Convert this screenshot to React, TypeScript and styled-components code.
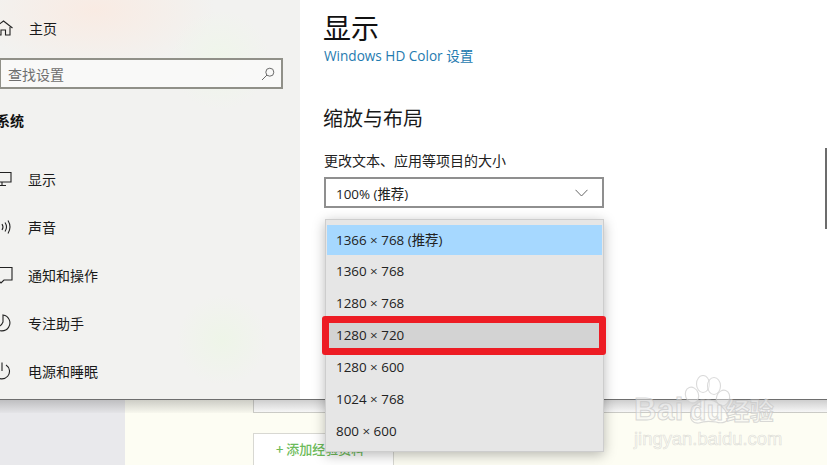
import React from "react";
import styled, { createGlobalStyle } from "styled-components";

const Global = createGlobalStyle`
  html, body { margin: 0; padding: 0; width: 827px; height: 465px; overflow: hidden; background: #fdfdf3; }
  * { box-sizing: border-box; }
`;
const FONT = `"Noto Sans CJK SC", "Noto Sans", sans-serif`;
const NUM = `"Open Sans", "Noto Sans CJK SC", sans-serif`;

const Page = styled.div`
  position: relative; width: 827px; height: 465px; overflow: hidden;
  display: flex; flex-direction: column; font-family: ${FONT}; color: #1a1a1a;
`;
const Win = styled.div`
  height: 400px; flex: none; display: flex; background: #fff;
  border-bottom: 1px solid #6e6e6e; position: relative; z-index: 2;
`;
const Sidebar = styled.nav`
  width: 300px; flex: none; overflow: hidden; padding-top: 18px;
  background:
    radial-gradient(circle 45px at 222px 340px, #eef5e8 0%, rgba(238,245,232,0) 100%),
    radial-gradient(circle 50px at 220px 60px, #eff6ea 0%, rgba(239,246,234,0) 100%),
    radial-gradient(ellipse 120px 60px at 95px 10px, #f9ebe3 0%, rgba(249,235,227,0) 100%),
    #f2f2f0;
`;
const NavRow = styled.div`
  height: 48px; display: flex; align-items: center; font-size: 14px; margin-left: -8px;
`;
const HomeRow = styled(NavRow)`
  height: 20px; margin-bottom: 20px; margin-left: -7px;
`;
const IconBox = styled.span`
  width: 36px; flex: none; display: flex; align-items: center; color: #222;
`;
const Search = styled.div`
  height: 31px; width: 284px; margin-left: -1px; border: 2px solid #909088;
  background: rgba(250,250,248,.9); display: flex; align-items: center;
  justify-content: space-between; padding: 0 6px 0 7px; font-size: 14px; color: #6e6e6e;
`;
const SectionTitle = styled.div`
  font-size: 14px; font-weight: 700; margin: 21px 0 25px -4px; line-height: 20px; color: #111;
`;
const Main = styled.main`
  flex: 1; padding: 10px 0 0 24px; position: relative;
`;
const Title = styled.h1`
  margin: 0 0 0 -1px; font-size: 28px; font-weight: 400; line-height: 34px; color: #111;
`;
const Link = styled.div`
  font-family: ${NUM}; font-size: 13.6px; color: #1f7bb0; line-height: 20px; margin-top: 2px;
`;
const Subtitle = styled.h2`
  margin: 37px 0 0 -1px; font-size: 20px; font-weight: 400; line-height: 30px; color: #1a1a1a;
`;
const FieldLabel = styled.div`
  font-size: 14px; line-height: 20px; margin-top: 17px; color: #222;
`;
const Combo = styled.div`
  width: 280px; height: 31px; margin-top: 7px; border: 2px solid #8f8f8f; background: #fff;
  display: flex; align-items: center; justify-content: space-between;
  padding: 0 14px 0 10px; font-family: ${NUM}; font-size: 13.4px; color: #222;
`;
const Scrollbar = styled.span`
  position: absolute; right: 0; top: 148px; width: 2px; height: 81px; background: #6c6c6c;
`;
const Below = styled.div`
  flex: 1; display: flex; background: #fdfdf3; position: relative;
`;
const Gutter = styled.div`
  width: 125px; flex: none; background: #e9e9ec;
`;
const Content = styled.div`
  flex: 1; padding-left: 128px; display: flex; flex-direction: column; align-items: flex-start;
`;
const CardEdge = styled.div`
  width: 100%; height: 13px; border-left: 1px solid #cfcfca; border-bottom: 1px solid #cfcfca; background: #fff;
`;
const AddButton = styled.div`
  width: 141px; height: 40px; margin-top: 20px; border: 1px solid #d8d8d2; background: #fff;
  padding: 5px 0 0 22px; font-size: 13px; line-height: 20px; font-weight: 500; color: #6dbb5a; white-space: nowrap;
`;
const Shade = styled.div`
  position: absolute; left: 0; right: 0; top: 400px; height: 13px; z-index: 3;
  background: linear-gradient(to bottom, rgba(80,80,80,.28), rgba(120,120,120,.04));
`;
const Menu = styled.div`
  position: absolute; z-index: 5; left: 325px; top: 219px; width: 279px; height: 233px;
  padding: 3px 1px 0; background: #e6e6e6; border: 1px solid #cdcdcd;
  box-shadow: 0 3px 12px rgba(0,0,0,.28);
`;
const MenuItem = styled.div<{ $state?: "active" | "hover" }>`
  height: 32px; display: flex; align-items: center; padding-left: 9px;
  font-family: ${NUM}; font-size: 13.4px; color: #222;
  background: ${(p) =>
    p.$state === "active"
      ? "linear-gradient(to bottom, transparent 2px, #a6d8ff 2px)"
      : p.$state === "hover"
      ? "#d3d3d3"
      : "transparent"};
`;
const RedBox = styled.div`
  position: absolute; z-index: 6; left: 322px; top: 316px; width: 284px; height: 39px;
  border: 7.5px solid #ed1c24; border-radius: 3px;
`;
const Watermark = styled.div`
  position: absolute; z-index: 7; left: 633px; top: 375px; width: 160px; height: 84px;
`;
const Paw = styled.svg`
  position: absolute; left: 45px; top: 0;
`;
const Brand = styled.div`
  position: absolute; left: 1px; top: 18px; font: 700 31px/34px "Liberation Sans", sans-serif;
  color: rgba(245,245,245,.45); -webkit-text-stroke: 1px rgba(195,195,195,.65); white-space: nowrap; letter-spacing: .5px;
`;
const BrandDu = styled.span`
  margin-left: 6px; font-size: 27px;
`;
const BrandCn = styled.span`
  font: 700 24px/34px ${FONT}; margin-left: 2px; letter-spacing: 0;
`;
const Domain = styled.div`
  position: absolute; left: 1px; top: 54px; font: 400 18.4px/20px "Liberation Sans", sans-serif;
  color: rgba(250,250,245,.6); -webkit-text-stroke: .6px rgba(205,205,200,.65); white-space: nowrap;
`;

const S = { fill: "none", stroke: "#222", strokeWidth: 1.1 } as const;
const Home = () => (
  <svg width="22" height="16" viewBox="0 0 22 16" {...S}>
    <path d="M1 8 L10.5 1 L19.5 8" /><path d="M3.5 7 V15 H8 V10 H12.5 V15 H17 V7" />
  </svg>
);
const Monitor = () => (
  <svg width="22" height="16" viewBox="0 0 22 16" {...S}>
    <path d="M1 1.5 H19 V11 H1" /><path d="M10 11 V14.5 M6 14.5 H14" />
  </svg>
);
const Sound = () => (
  <svg width="22" height="16" viewBox="0 0 22 16" {...S}>
    <path d="M1 5 H4 L7 2 V14 L4 11 H1" /><path d="M10 5 Q12 8 10 11 M13 3.5 Q16 8 13 12.5 M16 1.5 Q20 8 16 14.5" />
  </svg>
);
const Note = () => (
  <svg width="22" height="18" viewBox="0 0 22 18" {...S}>
    <path d="M1 1.5 H20 V14 H12 L9 17 L6 14 H1" />
  </svg>
);
const Moon = () => (
  <svg width="22" height="18" viewBox="0 0 22 18" {...S}>
    <path d="M11 1 A8 8 0 1 1 3 13 A8 8 0 0 0 11 8 Z" />
  </svg>
);
const Power = () => (
  <svg width="22" height="18" viewBox="0 0 22 18" {...S}>
    <path d="M14 3 A7.5 7.5 0 1 1 6 3" /><path d="M10 0.5 V9" />
  </svg>
);
const SearchIcon = () => (
  <svg width="14" height="14" viewBox="0 0 14 14" fill="none" stroke="#6a6a6a" strokeWidth="1">
    <circle cx="8.8" cy="5.2" r="4" /><path d="M6 8 L1 13" />
  </svg>
);
const Chevron = () => (
  <svg width="13" height="8" viewBox="0 0 13 8" fill="none" stroke="#666" strokeWidth="1">
    <path d="M.5 .8 L6.5 7 L12.5 .8" />
  </svg>
);

const nav: [React.ReactNode, string][] = [
  [<Monitor />, "显示"],
  [<Sound />, "声音"],
  [<Note />, "通知和操作"],
  [<Moon />, "专注助手"],
  [<Power />, "电源和睡眠"],
];
const modes = ["1366 × 768 (推荐)", "1360 × 768", "1280 × 768", "1280 × 720", "1280 × 600", "1024 × 768", "800 × 600"];

export default function App() {
  return (
    <Page>
      <Global />
      <Win>
        <Sidebar>
          <HomeRow>
            <IconBox><Home /></IconBox>
            主页
          </HomeRow>
          <Search>
            查找设置
            <SearchIcon />
          </Search>
          <SectionTitle>系统</SectionTitle>
          {nav.map(([icon, label]) => (
            <NavRow key={label}>
              <IconBox>{icon}</IconBox>
              {label}
            </NavRow>
          ))}
        </Sidebar>
        <Main>
          <Title>显示</Title>
          <Link>Windows HD Color 设置</Link>
          <Subtitle>缩放与布局</Subtitle>
          <FieldLabel>更改文本、应用等项目的大小</FieldLabel>
          <Combo>
            100% (推荐)
            <Chevron />
          </Combo>
          <Scrollbar />
        </Main>
      </Win>
      <Below>
        <Gutter />
        <Content>
          <CardEdge />
          <AddButton>+ 添加经验资料</AddButton>
        </Content>
      </Below>
      <Shade />
      <Menu>
        {modes.map((m, i) => (
          <MenuItem key={m} $state={i === 0 ? "active" : i === 3 ? "hover" : undefined}>{m}</MenuItem>
        ))}
      </Menu>
      <RedBox />
      <Watermark>
        <Paw width="60" height="56" viewBox="0 0 60 56" fill="rgba(255,255,255,.4)" stroke="rgba(205,205,205,.75)" strokeWidth="1.1">
          <ellipse cx="14" cy="20" rx="6.5" ry="8" transform="rotate(-20 14 20)" />
          <ellipse cx="25" cy="9" rx="6.5" ry="8.5" />
          <ellipse cx="36" cy="11" rx="6.5" ry="8.5" />
          <ellipse cx="45" cy="23" rx="6.5" ry="8" transform="rotate(20 45 23)" />
          <path d="M13 38 C16 28 24 25 30 25 C38 25 46 32 50 40 C52 47 44 49 38 47 C32 46 26 46 21 48 C15 49 11 44 13 38 Z" />
        </Paw>
        <Brand>Bai<BrandDu>du</BrandDu><BrandCn>经验</BrandCn></Brand>
        <Domain>jingyan.baidu.com</Domain>
      </Watermark>
    </Page>
  );
}
